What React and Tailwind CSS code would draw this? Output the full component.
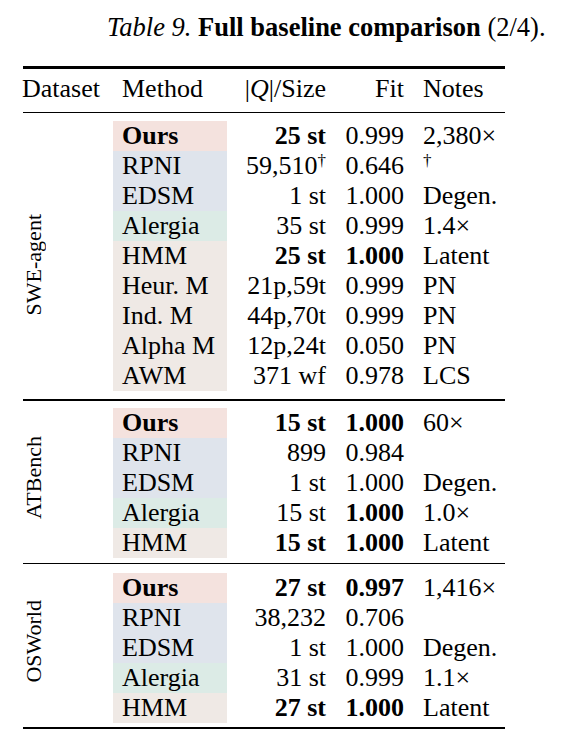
const SERIF = "font-['Liberation_Serif','Times_New_Roman',serif]";

const tone = {
  ours: "bg-[#f4e2de]",
  blue: "bg-[#dfe4ec]",
  teal: "bg-[#dcebe6]",
  sand: "bg-[#efe9e5]",
};

function methodTone(method) {
  if (method === "Ours") return tone.ours;
  if (method === "RPNI" || method === "EDSM") return tone.blue;
  if (method === "Alergia") return tone.teal;
  return tone.sand;
}

const sections = [
  {
    name: "SWE-agent",
    labelClass: "pt-[18px]",
    padTop: "pt-[8px]",
    padBottom: "pb-[8px]",
    rows: [
      { method: "Ours", size: "25 st", sizeBold: true, fit: "0.999", notes: "2,380×" },
      { method: "RPNI", size: "59,510", dagger: true, fit: "0.646", notes: "†", notesSup: true },
      { method: "EDSM", size: "1 st", fit: "1.000", notes: "Degen." },
      { method: "Alergia", size: "35 st", fit: "0.999", notes: "1.4×" },
      { method: "HMM", size: "25 st", sizeBold: true, fit: "1.000", fitBold: true, notes: "Latent" },
      { method: "Heur. M", size: "21p,59t", fit: "0.999", notes: "PN" },
      { method: "Ind. M", size: "44p,70t", fit: "0.999", notes: "PN" },
      { method: "Alpha M", size: "12p,24t", fit: "0.050", notes: "PN" },
      { method: "AWM", size: "371 wf", fit: "0.978", notes: "LCS" },
    ],
  },
  {
    name: "ATBench",
    labelClass: "pb-[10px]",
    padTop: "pt-[7.5px]",
    padBottom: "pb-[4.5px]",
    rows: [
      { method: "Ours", size: "15 st", sizeBold: true, fit: "1.000", fitBold: true, notes: "60×" },
      { method: "RPNI", size: "899", fit: "0.984", notes: "" },
      { method: "EDSM", size: "1 st", fit: "1.000", notes: "Degen." },
      { method: "Alergia", size: "15 st", fit: "1.000", fitBold: true, notes: "1.0×" },
      { method: "HMM", size: "15 st", sizeBold: true, fit: "1.000", fitBold: true, notes: "Latent" },
    ],
  },
  {
    name: "OSWorld",
    labelClass: "pb-[13px]",
    padTop: "pt-[9px]",
    padBottom: "pb-[3.5px]",
    rows: [
      { method: "Ours", size: "27 st", sizeBold: true, fit: "0.997", fitBold: true, notes: "1,416×" },
      { method: "RPNI", size: "38,232", fit: "0.706", notes: "" },
      { method: "EDSM", size: "1 st", fit: "1.000", notes: "Degen." },
      { method: "Alergia", size: "31 st", fit: "0.999", notes: "1.1×" },
      { method: "HMM", size: "27 st", sizeBold: true, fit: "1.000", fitBold: true, notes: "Latent" },
    ],
  },
];

function Row({ row }) {
  return (
    <div className="grid h-[30px] grid-cols-[114px_99px_78px_1fr] leading-[30px]">
      <div className={`pl-[9px] ${methodTone(row.method)} ${row.method === "Ours" ? "font-bold" : ""}`}>
        {row.method}
      </div>
      <div className={`text-right whitespace-nowrap ${row.sizeBold ? "font-bold" : ""}`}>
        {row.size}
        {row.dagger ? <sup className="text-[17px]">†</sup> : null}
      </div>
      <div className={`text-right ${row.fitBold ? "font-bold" : ""}`}>{row.fit}</div>
      <div className="pl-[19px] whitespace-nowrap">
        {row.notesSup ? <sup className="text-[17px]">{row.notes}</sup> : row.notes}
      </div>
    </div>
  );
}

function Section({ section }) {
  return (
    <div className={`flex ${section.padTop} ${section.padBottom}`}>
      <div className={`flex w-[90px] shrink-0 items-center ${section.labelClass}`}>
        <span className="rotate-180 text-[22px] leading-none whitespace-nowrap [writing-mode:vertical-rl]">
          {section.name}
        </span>
      </div>
      <div className="flex-1">
        {section.rows.map((row) => (
          <Row key={row.method} row={row} />
        ))}
      </div>
    </div>
  );
}

export default function App() {
  return (
    <div className={`min-h-[748px] w-[567px] bg-white text-black ${SERIF}`}>
      <div className="pt-[12px] pl-[107px] text-[26.5px] leading-[30px] whitespace-nowrap">
        <i>Table 9.</i> <b>Full baseline comparison</b> (2/4).
      </div>

      <div className="mt-[24px] ml-[23px] w-[482px] text-[26px]">
        <div className="h-[2.5px] bg-black" />
        <div className="grid h-[43px] grid-cols-[90px_114px_99px_78px_1fr] pt-[5px] leading-[30px]">
          <div className="-ml-px">Dataset</div>
          <div className="pl-[9px]">Method</div>
          <div className="text-right whitespace-nowrap">
            |<i>Q</i>|/Size
          </div>
          <div className="text-right">Fit</div>
          <div className="pl-[19px]">Notes</div>
        </div>
        <div className="h-[1.5px] bg-black" />

        {sections.map((section, i) => (
          <div key={section.name}>
            <Section section={section} />
            <div className={i === sections.length - 1 ? "h-[2.5px] bg-black" : "h-[1.5px] bg-black"} />
          </div>
        ))}
      </div>
    </div>
  );
}
